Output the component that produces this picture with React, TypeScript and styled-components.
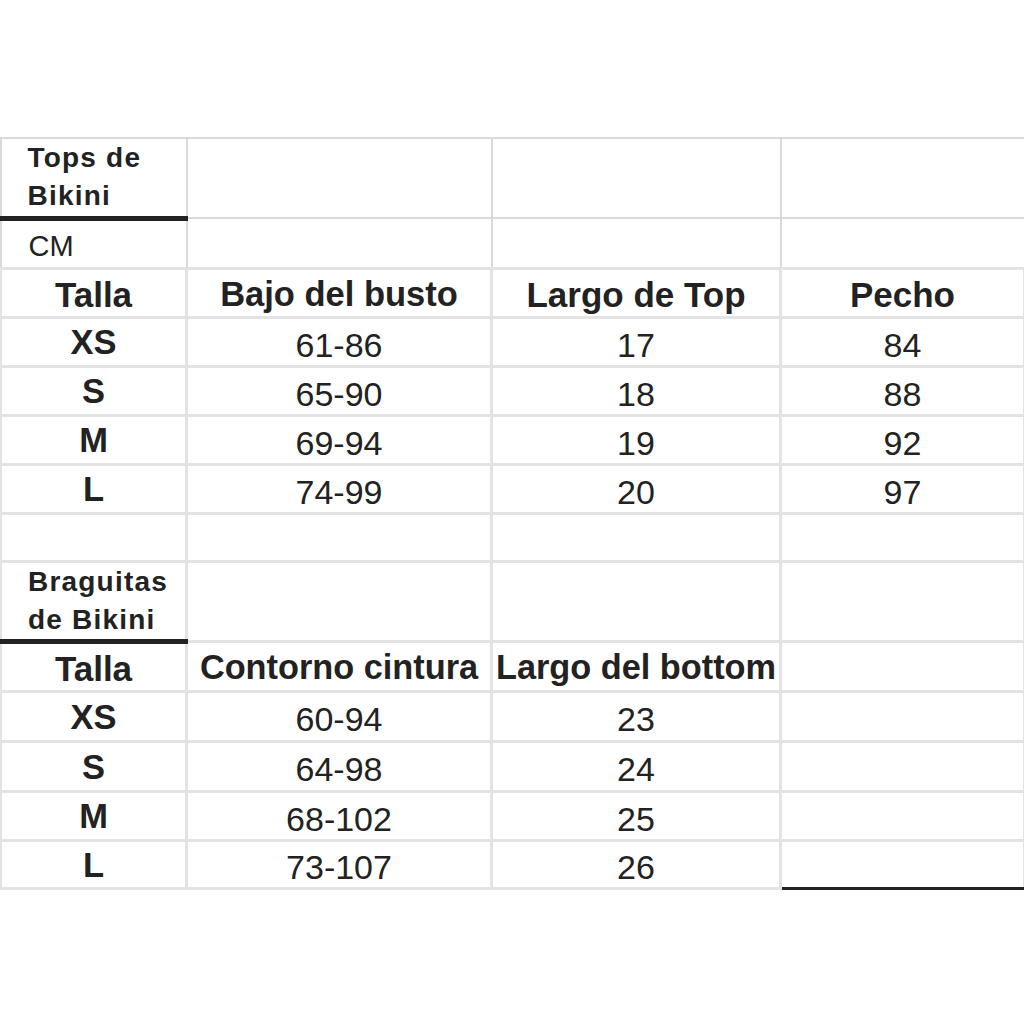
import React from "react";
import styled, { createGlobalStyle } from "styled-components";

const Global = createGlobalStyle`
  html, body {
    margin: 0;
    padding: 0;
    background: #ffffff;
  }
  body {
    padding-top: 137px;
    font-family: "Liberation Sans", Arial, sans-serif;
    color: #222222;
  }
`;

const Sheet = styled.table`
  border-collapse: collapse;
  table-layout: fixed;
  width: 1024px;
  margin-left: -1px;
  font-family: "Liberation Sans", Arial, sans-serif;
`;

const Row = styled.tr<{ $h: number }>`
  height: ${(p) => p.$h}px;
`;

const Cell = styled.td<{
  $thick?: boolean;
  $bottomLine?: boolean;
  $top?: boolean;
}>`
  border: ${(p) => (p.$top ? "2px solid #d9d9d9" : "3px solid #e3e3e3")};
  ${(p) => (p.$thick ? "border-bottom: 5px solid #222222;" : "")}
  ${(p) => (p.$bottomLine ? "border-bottom: 3px solid #222222;" : "")}
  padding: 0;
  vertical-align: middle;
  overflow: hidden;
  white-space: nowrap;
`;

const SectionTitle = styled.div`
  font-size: 28px;
  font-weight: 700;
  letter-spacing: 1.2px;
  line-height: 38px;
  padding-left: 26px;
  white-space: normal;
  color: #222222;
`;

const Unit = styled.div`
  font-size: 29px;
  line-height: 1;
  padding-left: 27px;
  padding-top: 6px;
  color: #222222;
`;

const Head = styled.div<{ $size?: number }>`
  font-size: ${(p) => p.$size ?? 35}px;
  font-weight: 700;
  line-height: 1;
  text-align: center;
  padding-top: 3px;
  color: #222222;
`;

const Size = styled.div`
  font-size: 34.5px;
  font-weight: 700;
  line-height: 1;
  text-align: center;
  padding-top: 2px;
  color: #222222;
`;

const Value = styled.div`
  font-size: 34px;
  font-weight: 400;
  line-height: 1;
  text-align: center;
  padding-top: 6px;
  color: #222222;
`;

const tops = [
  ["XS", "61-86", "17", "84"],
  ["S", "65-90", "18", "88"],
  ["M", "69-94", "19", "92"],
  ["L", "74-99", "20", "97"],
];

const bottoms = [
  ["XS", "60-94", "23"],
  ["S", "64-98", "24"],
  ["M", "68-102", "25"],
  ["L", "73-107", "26"],
];

export default function App() {
  return (
    <>
      <Global />
      <Sheet>
        <colgroup>
          <col style={{ width: 186 }} />
          <col style={{ width: 305 }} />
          <col style={{ width: 289 }} />
          <col style={{ width: 244 }} />
        </colgroup>
        <tbody>
          <Row $h={80}>
            <Cell $top $thick>
              <SectionTitle>Tops de Bikini</SectionTitle>
            </Cell>
            <Cell $top />
            <Cell $top />
            <Cell $top />
          </Row>
          <Row $h={50}>
            <Cell $top>
              <Unit>CM</Unit>
            </Cell>
            <Cell $top />
            <Cell $top />
            <Cell $top />
          </Row>
          <Row $h={49}>
            <Cell>
              <Head>Talla</Head>
            </Cell>
            <Cell>
              <Head $size={34.5}>Bajo del busto</Head>
            </Cell>
            <Cell>
              <Head>Largo de Top</Head>
            </Cell>
            <Cell>
              <Head>Pecho</Head>
            </Cell>
          </Row>
          {tops.map((r) => (
            <Row $h={49} key={r[0]}>
              <Cell>
                <Size>{r[0]}</Size>
              </Cell>
              <Cell>
                <Value>{r[1]}</Value>
              </Cell>
              <Cell>
                <Value>{r[2]}</Value>
              </Cell>
              <Cell>
                <Value>{r[3]}</Value>
              </Cell>
            </Row>
          ))}
          <Row $h={48}>
            <Cell />
            <Cell />
            <Cell />
            <Cell />
          </Row>
          <Row $h={80}>
            <Cell $thick>
              <SectionTitle>Braguitas de Bikini</SectionTitle>
            </Cell>
            <Cell />
            <Cell />
            <Cell />
          </Row>
          <Row $h={50}>
            <Cell>
              <Head>Talla</Head>
            </Cell>
            <Cell>
              <Head $size={34.3}>Contorno cintura</Head>
            </Cell>
            <Cell>
              <Head $size={34.3}>Largo del bottom</Head>
            </Cell>
            <Cell />
          </Row>
          {bottoms.map((r, i) => (
            <Row $h={i < 2 ? 50 : i === 3 ? 48 : 49} key={r[0]}>
              <Cell>
                <Size>{r[0]}</Size>
              </Cell>
              <Cell>
                <Value>{r[1]}</Value>
              </Cell>
              <Cell>
                <Value>{r[2]}</Value>
              </Cell>
              <Cell $bottomLine={i === 3} />
            </Row>
          ))}
        </tbody>
      </Sheet>
    </>
  );
}
